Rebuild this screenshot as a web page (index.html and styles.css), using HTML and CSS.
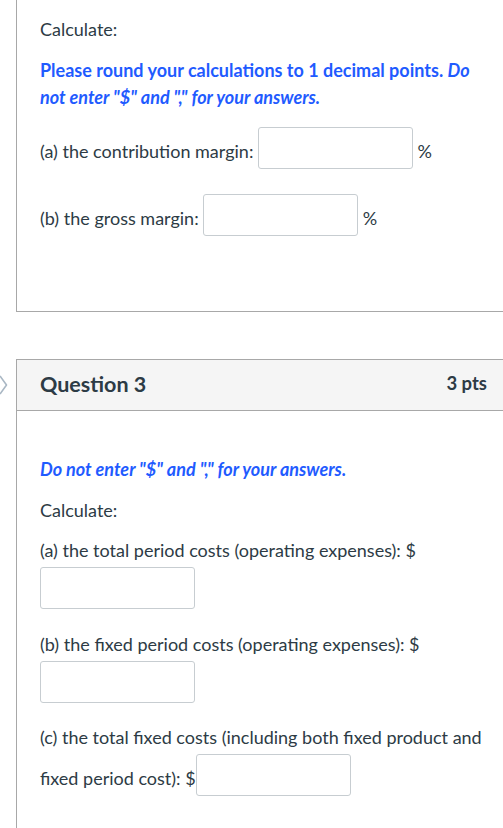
FILE: index.html
```html
<!DOCTYPE html>
<html lang="en">
<head>
<meta charset="utf-8">
<title>Quiz</title>
<link rel="stylesheet" href="styles.css">
</head>
<body>
<main class="page">
  <section class="card card-top">
    <div class="qbody">
      <p>Calculate:</p>
      <p class="note"><strong>Please round your calculations to 1 decimal points. <em>Do not enter "$" and "," for your answers.</em></strong></p>
      <p>(a) the contribution margin: <input class="ans" type="text" aria-label="contribution margin"> %</p>
      <p>(b) the gross margin: <input class="ans" type="text" aria-label="gross margin"> %</p>
    </div>
  </section>

  <section class="card card-q">
    <svg class="chev" width="12" height="22" viewBox="0 0 12 22" aria-hidden="true"><path d="M0 2 L6.5 11 L0 20" fill="none" stroke="#a9b7c4" stroke-width="1.6" stroke-linejoin="round"/></svg>
    <header class="qhead">
      <h2 class="qname">Question 3</h2>
      <span class="pts">3 pts</span>
    </header>
    <div class="qbody qbody-2">
      <p class="note"><strong><em>Do not enter "$" and "," for your answers.</em></strong></p>
      <p>Calculate:</p>
      <p>(a) the total period costs (operating expenses): $ <input class="ans" type="text" aria-label="total period costs"></p>
      <p>(b) the fixed period costs (operating expenses): $ <input class="ans" type="text" aria-label="fixed period costs"></p>
      <p>(c) the total fixed costs (including both fixed product and fixed period cost): $<input class="ans" type="text" aria-label="total fixed costs"></p>
    </div>
  </section>
</main>
</body>
</html>
```

FILE: styles.css
```css
html, body {
  margin: 0;
  padding: 0;
  background: #ffffff;
  overflow: hidden;
}

body {
  font-family: Lato, "Open Sans", "Liberation Sans", sans-serif;
  font-size: 18px;
  line-height: 27px;
  color: #2d3b45;
}

.page {
  padding-left: 16px;
  width: 494px;
}

.card {
  position: relative;
  border: 1px solid #a8a8a8;
  background: #ffffff;
}

.card-top {
  border-top: none;
}

.card-q {
  margin-top: 47px;
}

.qbody {
  padding: 16px 23px 54px 23px;
}

.qbody-2 {
  padding-top: 45px;
}

.qbody p {
  margin: 0 0 13.5px 0;
}

.note {
  color: #1f5bff;
}

.note strong {
  font-weight: 700;
}

.ans {
  box-sizing: border-box;
  width: 155px;
  height: 42px;
  margin: 3px 0 8px 0;
  padding: 0 8px;
  border: 1px solid #c7cdd1;
  border-radius: 3px;
  background: #ffffff;
  font: inherit;
  vertical-align: 3px;
}

.qhead {
  display: flex;
  align-items: center;
  justify-content: space-between;
  box-sizing: border-box;
  height: 51px;
  padding: 0 22px 3px 23px;
  background: #f5f5f5;
  border-bottom: 1px solid #a8a8a8;
}

.qname {
  margin: 0;
  font-size: 21.5px;
  font-weight: 700;
  line-height: 24px;
  color: #2d3b45;
}

.pts {
  font-size: 18.5px;
  font-weight: 700;
  color: #2d3b45;
}

.chev {
  position: absolute;
  left: -17px;
  top: 14px;
}
```
